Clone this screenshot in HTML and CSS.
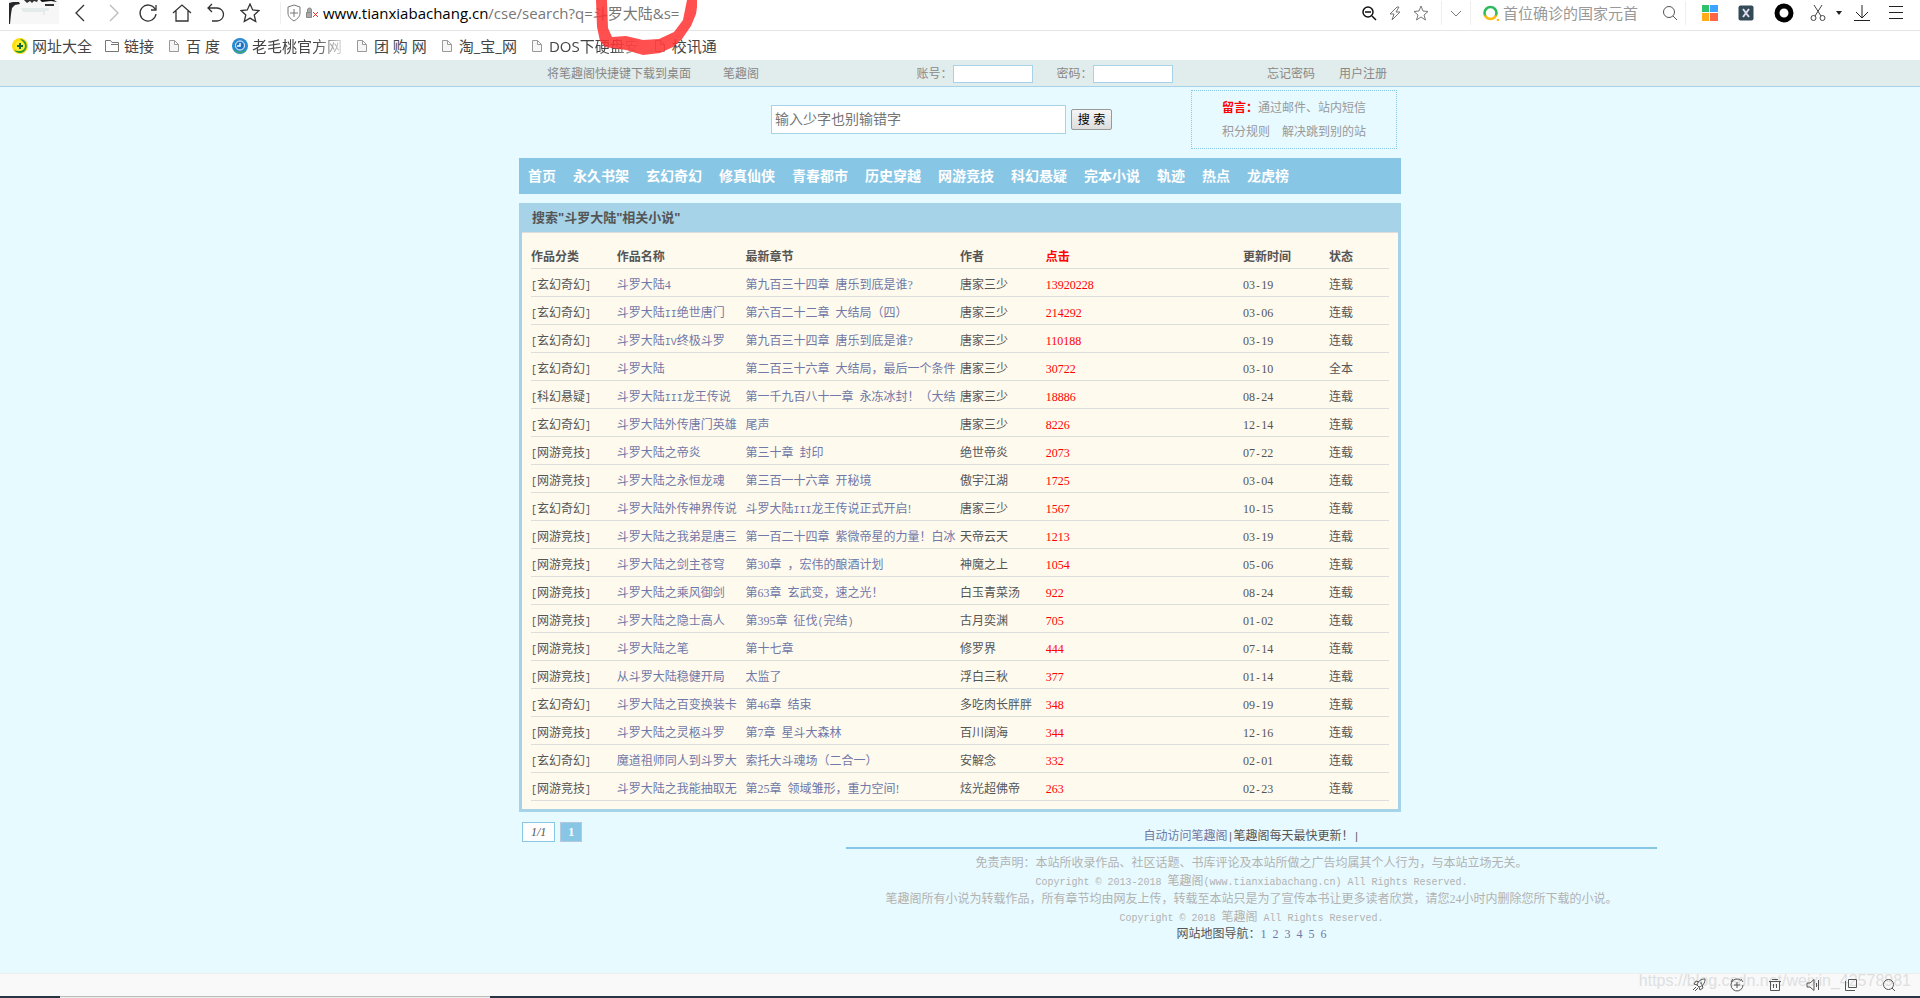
FILE: index.html
```html
<!DOCTYPE html>
<html lang="zh-CN">
<head>
<meta charset="utf-8">
<title>搜索"斗罗大陆"相关小说</title>
<link rel="stylesheet" href="styles.css">
</head>
<body>
<header class="toolbar">
  <svg class="avatar" width="50" height="24" viewBox="0 0 50 24"><rect width="50" height="24" fill="#f6f7f6"/><path d="M0 3l4-1h6l1 2-5 1-3 3-1 6-1 10H0z" fill="#26272a"/><path d="M15 0h14l-1 2-3-1-2 2-2-2-3 2z" fill="#333"/><path d="M31 0h14l3 2-6-1-9 1z" fill="#111"/><path d="M36 4h9v2h-9z" fill="#333"/><path d="M12 8h28v3h-4v4h-2v-3H14z" fill="#e4eceb"/></svg>
  <nav class="nav-buttons">
    <button aria-label="后退"><svg width="20" height="20" viewBox="0 0 20 20"><path d="M14 2L6 10l8 8"/></svg></button>
    <button aria-label="前进" class="off"><svg width="20" height="20" viewBox="0 0 20 20"><path d="M6 2l8 8-8 8"/></svg></button>
    <button aria-label="刷新"><svg width="20" height="20" viewBox="0 0 20 20"><path d="M17 6A8 8 0 1 0 18 11M18 2v5h-5"/></svg></button>
    <button aria-label="主页"><svg width="20" height="20" viewBox="0 0 20 20"><path d="M1 10l9-8 9 8M4 8v10h12V8"/></svg></button>
    <button aria-label="撤销"><svg width="20" height="20" viewBox="0 0 20 20"><path d="M6 1L2 5l4 4M2 5h9a6 6 0 0 1 0 13H6"/></svg></button>
    <button aria-label="收藏"><svg width="20" height="20" viewBox="0 0 20 20"><path d="M10 1l2.700 6 6.300.600-4.800 4.400 1.500 6.500-5.700-3.400-5.700 3.400 1.500-6.500L1 7.600 7.300 7z"/></svg></button>
  </nav>
  <div class="address">
    <svg width="14" height="18" viewBox="0 0 14 18"><path d="M7 1l6 2v6c0 4-3 6-6 8-3-2-6-4-6-8V3zM7 5v8M3 9h8" fill="none" stroke="#777"/></svg>
    <svg width="14" height="14" viewBox="0 0 14 14"><path d="M1.500 6.500h5v5h-5zM2.500 6V4a2 2 0 0 1 4 0v2" fill="#aaa" stroke="#888"/><path d="M8 6l5 5M13 6l-5 5" stroke="#e33"/></svg>
    <span class="url"><b>www.tianxiabachang.cn</b>/cse/search?q=斗罗大陆&amp;s=</span>
  </div>
  <div class="tools page-tools">
    <svg width="16" height="16" viewBox="0 0 16 16" stroke="#111" stroke-width="1.500"><circle cx="7" cy="7" r="5"/><path d="M11 11l4 4M4 7h6"/></svg>
    <svg width="16" height="16" viewBox="0 0 16 16" stroke="#777"><path d="M10 2L3 9h4l-2 6 8-8H9l3-5z"/></svg>
    <svg width="16" height="16" viewBox="0 0 16 16" stroke="#777"><path d="M8 1l2 5 5 .500-4 3.500 1.500 5L8 12l-4.500 3L5 10 1 6.500 6 6z"/></svg>
  </div>
  <div class="tools drop"><svg width="12" height="12" viewBox="0 0 12 12" stroke="#777"><path d="M1 4l5 5 5-5"/></svg></div>
  <label class="quick">
    <svg width="16" height="16" viewBox="0 0 16 16"><circle cx="7.500" cy="8" r="6" stroke="url(#ring)" stroke-width="2.500"/><circle cx="15" cy="15" r="1.300" fill="#fb1"/><defs><linearGradient id="ring" x2="0" y2="1"><stop offset=".6" stop-color="#2cba5a"/><stop offset=".8" stop-color="#fb1"/></linearGradient></defs></svg>
    <input type="text" placeholder="首位确诊的国家元首" aria-label="快速搜索">
    <svg width="16" height="16" viewBox="0 0 16 16" stroke="#555"><circle cx="7" cy="7" r="5.500"/><path d="M11 11l4 4"/></svg>
  </label>
  <div class="tools apps">
    <svg width="16" height="16" viewBox="0 0 16 16"><path fill="#2dc26b" d="M0 0h7v7H0z"/><path fill="#3fa4ff" d="M8 0h8v7H8z"/><path fill="#ffab1a" d="M0 8h7v8H0z"/><path fill="#ff6747" d="M8 8h8v8H8z"/></svg>
    <svg width="16" height="16" viewBox="0 0 16 16"><rect x=".5" y=".5" width="15" height="15" rx="2" fill="#344b57"/><path d="M5 4l6 8M11 4l-6 8" stroke="#dde" stroke-width="2"/></svg>
    <svg width="20" height="20" viewBox="0 0 20 20"><circle cx="10" cy="10" r="7" stroke="#000" stroke-width="5"/></svg>
  </div>
  <div class="tools">
    <svg width="16" height="18" viewBox="0 0 16 18" stroke="#444"><path d="M4 1l7 11M12 1L5 12"/><circle cx="3.500" cy="14" r="2.500"/><circle cx="12.500" cy="14" r="2.500"/></svg>
    <svg width="6" height="4" viewBox="0 0 6 4"><path d="M0 0h6L3 4z" fill="#222"/></svg>
  </div>
  <div class="tools menu">
    <svg width="16" height="18" viewBox="0 0 16 18" stroke="#222"><path d="M8 1v13M2 8l6 6 6-6M0 16.500h16"/></svg>
    <svg width="16" height="16" viewBox="0 0 16 16" stroke="#222"><path d="M1 1.500h14M1 7.500h14M1 13.500h14"/></svg>
  </div>
</header>
<nav class="bookmarks">
  <a href="#"><svg width="16" height="16" viewBox="0 0 16 16"><circle cx="8" cy="8" r="8" fill="#fd1"/><path d="M8 1a7 7 0 1 1-6 11C6 14 10 13 11 9s0-6-3-8z" fill="#2a9d35"/><circle cx="8" cy="8" r="5" fill="#fe3"/><path d="M8 5v6M5 8h6" stroke="#163" stroke-width="2"/></svg>网址大全</a>
  <a href="#"><svg width="16" height="16" viewBox="0 0 16 16"><path d="M1.500 13.500v-11h5l1.500 2h6.500v9zM7 6.500h7" stroke="#777"/></svg>链接</a>
  <a href="#"><svg width="16" height="16" viewBox="0 0 16 16"><path d="M3.500 2.500h5l4 4v7h-9zM8.500 2.500v4h4" fill="#f6f6f6" stroke="#999"/></svg>百 度</a>
  <a href="#" class="long"><svg width="16" height="16" viewBox="0 0 16 16"><circle cx="8" cy="8" r="8" fill="#2b8bd0"/><path d="M1 11a8 8 0 0 0 14 0c-3 3-10 4-14 0z" fill="#3fae5a"/><circle cx="8" cy="7.500" r="4.500" fill="#1d74c4" stroke="#fff"/><path d="M8 5v3H5" stroke="#fff" stroke-width="1.500"/></svg>老毛桃官方网</a>
  <a href="#"><svg width="16" height="16" viewBox="0 0 16 16"><path d="M3.500 2.500h5l4 4v7h-9zM8.500 2.500v4h4" fill="#f6f6f6" stroke="#999"/></svg>团 购 网</a>
  <a href="#"><svg width="16" height="16" viewBox="0 0 16 16"><path d="M3.500 2.500h5l4 4v7h-9zM8.500 2.500v4h4" fill="#f6f6f6" stroke="#999"/></svg>淘_宝_网</a>
  <a href="#" class="long"><svg width="16" height="16" viewBox="0 0 16 16"><path d="M3.500 2.500h5l4 4v7h-9zM8.500 2.500v4h4" fill="#f6f6f6" stroke="#999"/></svg>DOS下硬盘安</a>
  <a href="#"><svg width="16" height="16" viewBox="0 0 16 16"><path d="M3.500 2.500h5l4 4v7h-9zM8.500 2.500v4h4" fill="#f6f6f6" stroke="#999"/></svg>校讯通</a>
</nav>
<svg class="marker" width="110" height="56" viewBox="0 0 110 56"><path d="M9 0h11l1 28 4 9 14-1 17 4 16-1 15-7 9-12 4-20h11l-2 14-5 12-9 13-9 8-13 6-17 2-17-5-21-3-5-6-3-14z" fill="#ff3030" fill-opacity=".85"/></svg>

<main class="site">
  <div class="topbar">
    <div class="wrap topbar-in">
      <div class="shortcuts"><a href="#">将笔趣阁快捷键下载到桌面</a><a href="#">笔趣阁</a></div>
      <form class="login"><label>账号：<input type="text"></label><label>密码：<input type="password"></label></form>
      <div class="account"><a href="#">忘记密码</a><a href="#">用户注册</a></div>
    </div>
  </div>
  <div class="wrap head">
    <form class="search"><input type="text" placeholder="输入少字也别输错字" aria-label="搜索"><button type="button">搜 索</button></form>
    <p class="notice"><b>留言：</b>通过邮件、站内短信<br>积分规则　解决跳到别的站</p>
  </div>
  <nav class="wrap menu-bar">
    <a href="#">首页</a><a href="#">永久书架</a><a href="#">玄幻奇幻</a><a href="#">修真仙侠</a><a href="#">青春都市</a><a href="#">历史穿越</a><a href="#">网游竞技</a><a href="#">科幻悬疑</a><a href="#">完本小说</a><a href="#">轨迹</a><a href="#">热点</a><a href="#">龙虎榜</a>
  </nav>
  <section class="wrap panel">
    <h1>搜索"斗罗大陆"相关小说"</h1>
    <table>
      <colgroup><col class="c10"><col class="c15"><col class="c25"><col class="c10"><col class="c23"><col class="c10"><col></colgroup>
      <thead><tr><th>作品分类</th><th>作品名称</th><th>最新章节</th><th>作者</th><th class="hits">点击</th><th>更新时间</th><th>状态</th></tr></thead>
      <tbody>
      <tr><td><i>[</i>玄幻奇幻<i>]</i></td><td><a href="#">斗罗大陆4</a></td><td><a href="#"><span>第九百三十四章</span> 唐乐到底是谁?</a></td><td>唐家三少</td><td class="hits">13920228</td><td>03<i>-</i>19</td><td>连载</td></tr>
      <tr><td><i>[</i>玄幻奇幻<i>]</i></td><td><a href="#">斗罗大陆<i>II</i>绝世唐门</a></td><td><a href="#"><span>第六百二十二章</span> 大结局（四）</a></td><td>唐家三少</td><td class="hits">214292</td><td>03<i>-</i>06</td><td>连载</td></tr>
      <tr><td><i>[</i>玄幻奇幻<i>]</i></td><td><a href="#">斗罗大陆<i>IV</i>终极斗罗</a></td><td><a href="#"><span>第九百三十四章</span> 唐乐到底是谁?</a></td><td>唐家三少</td><td class="hits">110188</td><td>03<i>-</i>19</td><td>连载</td></tr>
      <tr><td><i>[</i>玄幻奇幻<i>]</i></td><td><a href="#">斗罗大陆</a></td><td><a href="#"><span>第二百三十六章</span> 大结局，最后一个条件</a></td><td>唐家三少</td><td class="hits">30722</td><td>03<i>-</i>10</td><td>全本</td></tr>
      <tr><td><i>[</i>科幻悬疑<i>]</i></td><td><a href="#">斗罗大陆<i>III</i>龙王传说</a></td><td><a href="#"><span>第一千九百八十一章</span> 永冻冰封！（大结</a></td><td>唐家三少</td><td class="hits">18886</td><td>08<i>-</i>24</td><td>连载</td></tr>
      <tr><td><i>[</i>玄幻奇幻<i>]</i></td><td><a href="#">斗罗大陆外传唐门英雄</a></td><td><a href="#">尾声</a></td><td>唐家三少</td><td class="hits">8226</td><td>12<i>-</i>14</td><td>连载</td></tr>
      <tr><td><i>[</i>网游竞技<i>]</i></td><td><a href="#">斗罗大陆之帝炎</a></td><td><a href="#"><span>第三十章</span> 封印</a></td><td>绝世帝炎</td><td class="hits">2073</td><td>07<i>-</i>22</td><td>连载</td></tr>
      <tr><td><i>[</i>网游竞技<i>]</i></td><td><a href="#">斗罗大陆之永恒龙魂</a></td><td><a href="#"><span>第三百一十六章</span> 开秘境</a></td><td>傲宇江湖</td><td class="hits">1725</td><td>03<i>-</i>04</td><td>连载</td></tr>
      <tr><td><i>[</i>玄幻奇幻<i>]</i></td><td><a href="#">斗罗大陆外传神界传说</a></td><td><a href="#">斗罗大陆<i>III</i>龙王传说正式开启!</a></td><td>唐家三少</td><td class="hits">1567</td><td>10<i>-</i>15</td><td>连载</td></tr>
      <tr><td><i>[</i>网游竞技<i>]</i></td><td><a href="#">斗罗大陆之我弟是唐三</a></td><td><a href="#"><span>第一百二十四章</span> 紫微帝星的力量！白冰</a></td><td>天帝云天</td><td class="hits">1213</td><td>03<i>-</i>19</td><td>连载</td></tr>
      <tr><td><i>[</i>网游竞技<i>]</i></td><td><a href="#">斗罗大陆之剑主苍穹</a></td><td><a href="#"><span>第30章</span> ，宏伟的酿酒计划</a></td><td>神魔之上</td><td class="hits">1054</td><td>05<i>-</i>06</td><td>连载</td></tr>
      <tr><td><i>[</i>网游竞技<i>]</i></td><td><a href="#">斗罗大陆之乘风御剑</a></td><td><a href="#"><span>第63章</span> 玄武变，速之光！</a></td><td>白玉青菜汤</td><td class="hits">922</td><td>08<i>-</i>24</td><td>连载</td></tr>
      <tr><td><i>[</i>网游竞技<i>]</i></td><td><a href="#">斗罗大陆之隐士高人</a></td><td><a href="#"><span>第395章</span> 征伐<i>(</i>完结<i>)</i></a></td><td>古月奕渊</td><td class="hits">705</td><td>01<i>-</i>02</td><td>连载</td></tr>
      <tr><td><i>[</i>网游竞技<i>]</i></td><td><a href="#">斗罗大陆之笔</a></td><td><a href="#">第十七章</a></td><td>修罗界</td><td class="hits">444</td><td>07<i>-</i>14</td><td>连载</td></tr>
      <tr><td><i>[</i>网游竞技<i>]</i></td><td><a href="#">从斗罗大陆稳健开局</a></td><td><a href="#">太监了</a></td><td>浮白三秋</td><td class="hits">377</td><td>01<i>-</i>14</td><td>连载</td></tr>
      <tr><td><i>[</i>玄幻奇幻<i>]</i></td><td><a href="#">斗罗大陆之百变换装卡</a></td><td><a href="#"><span>第46章</span> 结束</a></td><td>多吃肉长胖胖</td><td class="hits">348</td><td>09<i>-</i>19</td><td>连载</td></tr>
      <tr><td><i>[</i>网游竞技<i>]</i></td><td><a href="#">斗罗大陆之灵柩斗罗</a></td><td><a href="#"><span>第7章</span> 星斗大森林</a></td><td>百川阔海</td><td class="hits">344</td><td>12<i>-</i>16</td><td>连载</td></tr>
      <tr><td><i>[</i>玄幻奇幻<i>]</i></td><td><a href="#">魔道祖师同人到斗罗大</a></td><td><a href="#">索托大斗魂场（二合一）</a></td><td>安解念</td><td class="hits">332</td><td>02<i>-</i>01</td><td>连载</td></tr>
      <tr><td><i>[</i>网游竞技<i>]</i></td><td><a href="#">斗罗大陆之我能抽取无</a></td><td><a href="#"><span>第25章</span> 领域雏形，重力空间!</a></td><td>炫光超佛帝</td><td class="hits">263</td><td>02<i>-</i>23</td><td>连载</td></tr>
      </tbody>
    </table>
  </section>
  <div class="bottom">
    <div class="pager"><em>1/1</em><strong>1</strong></div>
    <footer>
      <p class="visit"><a href="#">自动访问笔趣阁</a><i>|</i>笔趣阁每天最快更新！<i>|</i></p>
      <div class="legal">
        <p>免责声明：本站所收录作品、社区话题、书库评论及本站所做之广告均属其个人行为，与本站立场无关。</p>
        <p><i>Copyright © 2013-2018 </i>笔趣阁<i>(www.tianxiabachang.cn) All Rights Reserved.</i></p>
        <p>笔趣阁所有小说为转载作品，所有章节均由网友上传，转载至本站只是为了宣传本书让更多读者欣赏，请您24小时内删除您所下载的小说。</p>
        <p><i>Copyright © 2018 </i>笔趣阁<i> All Rights Reserved.</i></p>
      </div>
      <p class="map"><span>网站地图导航：<a href="#">1</a></span><a href="#">2</a><a href="#">3</a><a href="#">4</a><a href="#">5</a><a href="#">6</a></p>
    </footer>
  </div>
</main>

<div class="status">
  <span class="watermark">https://blog.csdn.net/weixin_42578981</span>
  <svg width="14" height="14" viewBox="0 0 14 14"><path d="M5 7c1-4 4-6 8-6 0 4-2 7-6 8zM5 7L2 6l2-3 3 1M7 9l1 3 3-2-1-3M4 9l-3 3M6 10l-3 3M9 4v2h1"/></svg>
  <svg width="14" height="14" viewBox="0 0 14 14"><path d="M11 2.500A6 6 0 1 0 13 7M3 1l-2 3M11 1l2 3M7 4v6M4 7h6"/></svg>
  <svg width="14" height="14" viewBox="0 0 14 14"><path d="M1 3.500h12M2.500 4v8.500h9V4M4 1.500h6M5.500 6v4M8.500 6v4"/></svg>
  <svg width="14" height="14" viewBox="0 0 14 14"><path d="M1 5h3l4-3.500v11L4 9H1zM10.500 5v4M12.500 2v10"/></svg>
  <svg width="14" height="14" viewBox="0 0 14 14"><path d="M4.500 1.500h8v8h-8zM1.500 3v9.500H11"/></svg>
  <svg width="14" height="14" viewBox="0 0 14 14"><circle cx="6.500" cy="6.500" r="5"/><path d="M10 10l3 3"/></svg>
</div>
<div class="taskbar"><span></span></div>
</body>
</html>
```
FILE: styles.css
```css
* { box-sizing: border-box; }
body {
  margin: 0;
  min-height: 100vh;
  display: flex;
  flex-direction: column;
  position: relative;
  background: #fff;
  color: #555;
  font: 12px/18px "Liberation Serif", "Noto Sans CJK SC", serif;
}
a { color: inherit; text-decoration: none; }
p, h1 { margin: 0; }
svg { flex: none; fill: none; }
button, input { font: inherit; }

/* browser toolbar */
.toolbar {
  display: flex;
  align-items: center;
  height: 31px;
  padding: 0 16px 4px 9px;
  border-bottom: 1px solid #e5e5e5;
  white-space: nowrap;
}
.avatar { align-self: flex-start; }
.nav-buttons { display: flex; gap: 14px; padding: 0 20px 0 11px; }
.nav-buttons button { display: flex; padding: 0; border: 0; background: none; }
.nav-buttons svg { stroke: #333; stroke-width: 1.300; }
.nav-buttons .off svg { stroke: #bbb; }
.address {
  flex: 1;
  display: flex;
  align-items: center;
  gap: 4px;
  padding-left: 6px;
  border-left: 1px solid #eee;
}
.url { font: 15px/22px "Open Sans", "Noto Sans CJK SC", sans-serif; color: #777; }
.url b { font-weight: 400; color: #000; }
.tools { display: flex; align-items: center; gap: 10px; }
.page-tools { padding-right: 12px; }
.drop { padding: 6px 8px; border: solid #eee; border-width: 0 1px; }
.quick {
  display: flex;
  align-items: center;
  gap: 4px;
  padding: 2px 7px 2px 12px;
  border-right: 1px solid #eee;
}
.quick input {
  width: 155px;
  padding: 0;
  border: 0;
  font: 15px/20px "Noto Sans CJK SC", sans-serif;
}
.quick input::placeholder { color: #999; }
.apps { gap: 20px; padding: 0 16px; }
.menu { gap: 18px; padding-left: 12px; }

.bookmarks {
  display: flex;
  align-items: center;
  gap: 12px;
  height: 29px;
  padding-left: 12px;
  font: 15px/22px "Open Sans", "Noto Sans CJK SC", sans-serif;
  color: #444;
  white-space: nowrap;
}
.bookmarks a { display: flex; align-items: center; gap: 4px; }
.bookmarks .long { mask-image: linear-gradient(to right, #000 75%, #0003); }
.marker { position: absolute; left: 587px; top: 0; }

/* novel site */
.site {
  flex: 1;
  display: flex;
  flex-direction: column;
  background: #e7faff;
}
.wrap { width: 100%; max-width: 882px; margin: 0 auto; }
.topbar { background: #e1ecec; border-bottom: 1px solid #a6d3e8; color: #888; }
.topbar-in {
  display: flex;
  justify-content: space-between;
  align-items: center;
  height: 26px;
  padding: 1px 14px 0 28px;
}
.shortcuts { display: flex; gap: 32px; }
.login { display: flex; gap: 24px; padding-left: 63px; }
.login label { display: flex; align-items: center; }
.login input { width: 80px; height: 18px; border: 1px solid #a6d3e8; background: #fff; }
.account { display: flex; gap: 24px; }
.head {
  display: flex;
  justify-content: flex-end;
  align-items: center;
  padding: 3px 4px 9px 0;
}
.search { display: flex; align-items: center; gap: 5px; }
.search input {
  width: 295px;
  height: 29px;
  padding: 0 3px;
  border: 1px solid #a6d3e8;
  font-size: 14px;
}
.search input::placeholder { color: #757575; }
.search button {
  width: 41px;
  height: 21px;
  padding: 0;
  border: 1px solid #999;
  border-radius: 2px;
  background: linear-gradient(#f6f6f6, #ddd);
  color: #000;
  font: 12px/18px "Liberation Sans", "Noto Sans CJK SC", sans-serif;
}
.notice {
  width: 206px;
  height: 59px;
  margin-left: 79px;
  padding-top: 5px;
  border: 1px dotted #88c6e5;
  color: #999;
  line-height: 24px;
  text-align: center;
}
.notice b { color: #f00; }
.menu-bar {
  display: flex;
  gap: 17px;
  padding: 2px 9px 0;
  background: #88c6e5;
  color: #fff;
  font-size: 14px;
  font-weight: 700;
  line-height: 34px;
  margin-bottom: 9px;
}
.panel { border: 3px solid #a6d3e8; border-top: 0; background: #fffaee; padding-bottom: 8px; }
.panel h1 {
  padding-left: 10px;
  border-bottom: 1px solid #ddd;
  background: #a6d3e8;
  font: 700 13px/29px "Liberation Sans", "Noto Sans CJK SC", sans-serif;
}
table {
  width: calc(100% - 18px);
  margin: 7px 9px 0;
  border-collapse: collapse;
  table-layout: fixed;
}
.c10 { width: 10%; }
.c15 { width: 15%; }
.c25 { width: 25%; }
.c23 { width: 23%; }
th, td {
  height: 28px;
  padding: 6px 0 0;
  border-bottom: 1px solid #ddd;
  line-height: 20px;
  text-align: left;
  white-space: nowrap;
}
td a { color: #6f78a7; }
td span { margin-right: 3px; }
td.hits, th.hits { color: #f00; }
i { font: 10px/12px "Liberation Mono", monospace; white-space: pre; }

.bottom {
  display: flex;
  align-items: flex-start;
  padding: 10px 20px 0 calc(50% - 438px);
}
.pager { flex: none; display: flex; gap: 5px; width: 324px; }
.pager em, .pager strong {
  padding: 0 7px;
  border: 1px solid #88c6e5;
  background: #fff;
}
.pager em { padding: 0 8px; }
.pager strong { border-color: #b4c8de; background: #88c6e5; color: #fff; }
footer { flex: 1; max-width: 811px; text-align: center; }
.visit { padding: 5px 0 2px; border-bottom: 2px solid #88c6e5; }
.visit a, .map a { color: #6f78a7; }
.legal { padding-top: 5px; color: #b2b2b2; }
.map { display: flex; justify-content: center; gap: 6px; line-height: 16px; }

.status {
  display: flex;
  justify-content: flex-end;
  align-items: center;
  gap: 24px;
  height: 23px;
  padding-right: 24px;
  border-top: 1px solid #eee;
  background: #f9f9f9;
  position: relative;
}
.status svg { stroke: #555; position: relative; }
.watermark {
  position: absolute;
  right: 9px;
  top: -3px;
  color: #dde0e1;
  font: 16px/20px "Liberation Sans", sans-serif;
}
.taskbar { height: 2px; padding-left: 60px; background: #283643; }
.taskbar span { display: block; width: 430px; height: 2px; border-top: 1px solid #bbb; background: #eee; }
```
